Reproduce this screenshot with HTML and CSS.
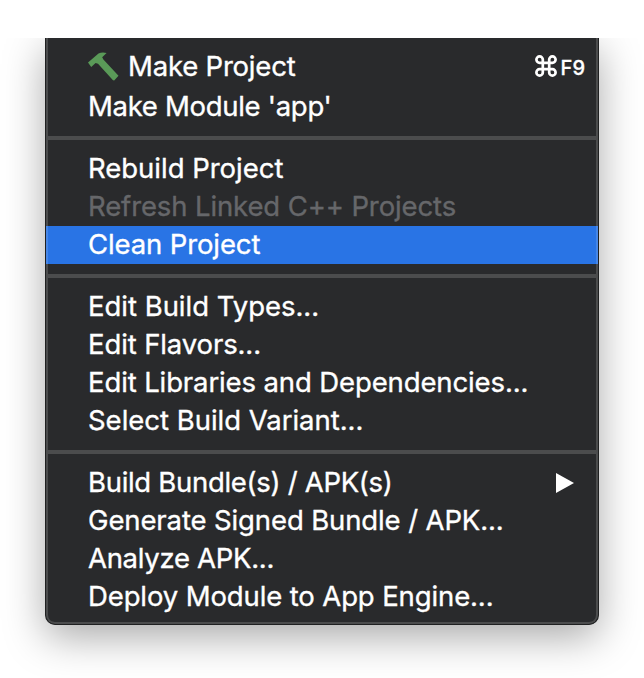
FILE: index.html
```html
<!DOCTYPE html>
<html lang="en">
    <head>
        <meta charset="UTF-8">
        <title>Build menu</title>
        <link rel="stylesheet" href="styles.css">
    </head>
    <body>
    <div class="stage">
        <ul class="menu">
            <li class="item first">
                <svg class="hammer" width="32" height="30" viewBox="0 0 32 30">
                    <path d="M0 10.5L10.5 1.6C13 .2 16 .3 18.6 1L14.2 5.2L15.4 7.6L30.5 23.8L26.2 28.6L25 28.2L10 11.8L7.6 11L3.2 15Z"/>
                </svg>
                <span class="label">Make Project</span>
                <span class="shortcut">
                    <svg class="cmd" width="22" height="22" viewBox="0 0 22 22">
                        <path d="M7.8 4.6A3.2 3.2 0 1 0 4.6 7.8H17.4A3.2 3.2 0 1 0 14.2 4.6V17.4A3.2 3.2 0 1 0 17.4 14.2H4.6A3.2 3.2 0 1 0 7.8 17.4Z"/>
                    </svg>
                    <span class="key">F9</span>
                </span>
            </li>
            <li class="item"><span class="label tight">Make Module 'app'</span></li>
            <li class="line"></li>
            <li class="item"><span class="label loose">Rebuild Project</span></li>
            <li class="item disabled"><span class="label">Refresh Linked C++ Projects</span></li>
            <li class="item selected"><span class="label">Clean Project</span></li>
            <li class="line"></li>
            <li class="item"><span class="label loose">Edit Build Types...</span></li>
            <li class="item"><span class="label">Edit Flavors...</span></li>
            <li class="item"><span class="label">Edit Libraries and Dependencies...</span></li>
            <li class="item"><span class="label loose">Select Build Variant...</span></li>
            <li class="line"></li>
            <li class="item">
                <span class="label tight">Build Bundle(s) / APK(s)</span>
                <svg class="arrow" width="18" height="20" viewBox="0 0 18 20"><path d="M0 0L18 10L0 20Z"/></svg>
            </li>
            <li class="item"><span class="label">Generate Signed Bundle / APK...</span></li>
            <li class="item"><span class="label tight">Analyze APK...</span></li>
            <li class="item"><span class="label">Deploy Module to App Engine...</span></li>
        </ul>
    </div>
    </body>
</html>
```
FILE: styles.css
```css
*{
    margin:0;
    padding:0;
    box-sizing:border-box;
}
body{
    background:#fff;
    font-family:Inter, "Liberation Sans", sans-serif;
}
ul{
    list-style:none;
}
/* cuts the shadow off above the menu */
.stage{
    height:640px;
    margin-top:38px;
    padding:0 45px;
    overflow:hidden;
}
.menu{
    width:554px;
    height:587px;
    padding-top:10px;
    border:1px solid #1f2021;
    border-top:0;
    border-radius:0 0 10px 10px;
    background:#292a2c;
    box-shadow:inset 2px 0 #4b4c4d, inset -2px 0 #4b4c4d, inset 0 -2px #4b4c4d, 0 12px 40px rgba(0,0,0,.34);
}
.item{
    display:flex;
    align-items:center;
    height:38px;
    padding:0 12px 2px 42px;
    color:#fff;
    font-size:27.5px;
    line-height:36px;
    white-space:nowrap;
}
.first{
    height:40px;
    padding-bottom:4px;
}
.label{
    letter-spacing:-0.12px;
    -webkit-text-stroke:.35px currentColor;
}
.tight{
    letter-spacing:-0.3px;
}
.loose{
    letter-spacing:-0.02px;
}
.disabled{
    color:#66676a;
}
.selected{
    background:#2974e5;
    box-shadow:inset 2px 0 #4686e7, inset -2px 0 #4686e7;
}
.line{
    height:4px;
    margin:10px 0;
    background:#4b4c4d;
}
.hammer{
    margin:2px 8px 0 0;
    fill:#5a9a58;
}
.first .label{
    letter-spacing:-0.2px;
}
.shortcut{
    display:flex;
    align-items:center;
    margin-left:auto;
    padding-right:1px;
    font-size:20px;
    font-weight:600;
}
.cmd{
    margin-right:4px;
    fill:none;
    stroke:#fff;
    stroke-width:2.7;
}
.key{
    padding-top:4px;
    font-weight:500;
    -webkit-text-stroke:.3px #fff;
}
.arrow{
    margin:1px 12px 0 auto;
    fill:#fff;
}
```
